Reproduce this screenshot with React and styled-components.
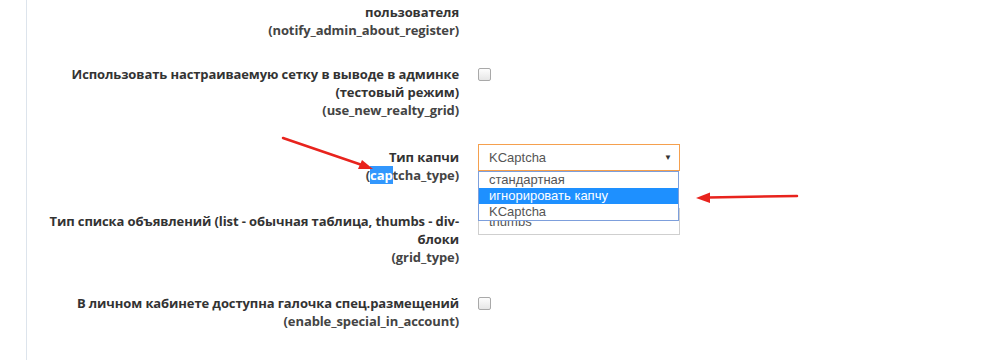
import React from 'react';
import styled, {createGlobalStyle} from 'styled-components';

const Global = createGlobalStyle`
  html, body { margin: 0; padding: 0; background: #fff; }
  body { width: 1000px; height: 360px; overflow: hidden; }
`

const Page = styled.div`
  position: relative;
  height: 360px;
  display: flex;
`

const Sidebar = styled.div`
  width: 26px;
  border-right: 1px solid #dde4ec;
  flex-shrink: 0;
`

const Settings = styled.div`
  display: flex;
  flex-direction: column;
  padding-top: 3px;
  font-family: "Open Sans", "Liberation Sans", sans-serif;
`

const Row = styled.div`
  display: flex;
  align-items: flex-start;
  margin-top: ${p => p.space || 0}px;
`

const Label = styled.div`
  width: 425px;
  margin-left: 7px;
  padding-top: ${p => p.offset || 0}px;
  text-align: right;
  font-size: 13px;
  line-height: 18px;
  font-weight: 700;
  letter-spacing: -0.1px;
  color: #333;
`

const Code = styled.div`
  color: #444;
`

const Selected = styled.span`
  background: #3297fd;
  color: #fff;
`

const Control = styled.div`
  position: relative;
  margin-left: 19px;
`

const Checkbox = styled.div`
  width: 11px;
  height: 11px;
  margin-top: 3px;
  border: 1px solid #a9a9a9;
  border-radius: 2px;
  background: linear-gradient(#fdfdfd, #e6e6e6);
`

const SelectBox = styled.div`
  width: 183px;
  height: 25px;
  border: 1px solid ${p => p.focused ? '#f5a04e' : '#cfcfcf'};
  display: flex;
  align-items: center;
  justify-content: space-between;
  padding: 0 7px 0 10px;
  font-family: "Liberation Sans", Arial, sans-serif;
  font-size: 13px;
  color: #555;
`

const Caret = styled.span`
  font-size: 8px;
  color: #333;
`

const Dropdown = styled.div`
  position: absolute;
  top: 27px;
  left: 0;
  width: 199px;
  border: 1px solid #7d9fdc;
  background: #fff;
  z-index: 2;
  font-family: "Liberation Sans", Arial, sans-serif;
  font-size: 13px;
`

const Option = styled.div`
  height: 16px;
  line-height: 16px;
  padding-left: 10px;
  background: ${p => p.active ? '#1e90ff' : '#fff'};
  color: ${p => p.active ? '#fff' : '#555'};
`

const Arrows = styled.svg`
  position: absolute;
  left: 0;
  top: 0;
  pointer-events: none;
  z-index: 3;
`

const App = () => {
  return (
    <Page>
      <Global />
      <Sidebar />
      <Settings>
        <Row>
          <Label>
            пользователя
            <Code>(notify_admin_about_register)</Code>
          </Label>
        </Row>
        <Row space={26}>
          <Label>
            Использовать настраиваемую сетку в выводе в админке (тестовый режим)
            <Code>(use_new_realty_grid)</Code>
          </Label>
          <Control>
            <Checkbox />
          </Control>
        </Row>
        <Row space={25}>
          <Label offset={4}>
            Тип капчи
            <Code>(<Selected>cap</Selected>tcha_type)</Code>
          </Label>
          <Control>
            <SelectBox focused>
              KCaptcha
              <Caret>▼</Caret>
            </SelectBox>
            <Dropdown>
              <Option>стандартная</Option>
              <Option active>игнорировать капчу</Option>
              <Option>KCaptcha</Option>
            </Dropdown>
          </Control>
        </Row>
        <Row space={24}>
          <Label offset={4}>
            Тип списка объявлений (list - обычная таблица, thumbs - div-блоки
            <Code>(grid_type)</Code>
          </Label>
          <Control>
            <SelectBox>
              thumbs
            </SelectBox>
          </Control>
        </Row>
        <Row space={28}>
          <Label>
            В личном кабинете доступна галочка спец.размещений
            <Code>(enable_special_in_account)</Code>
          </Label>
          <Control>
            <Checkbox />
          </Control>
        </Row>
      </Settings>
      <Arrows width="1000" height="360" viewBox="0 0 1000 360">
        <g stroke="#e8231d" strokeWidth="2.5" strokeLinecap="round" fill="#e8231d">
          <line x1="283" y1="138" x2="362" y2="165" />
          <polygon points="373,169 358,169 362,160" stroke="none" />
          <line x1="797" y1="196" x2="708" y2="197.5" />
          <polygon points="696,198 710,192.5 710,203" stroke="none" />
        </g>
      </Arrows>
    </Page>
  );
};

export default App;
